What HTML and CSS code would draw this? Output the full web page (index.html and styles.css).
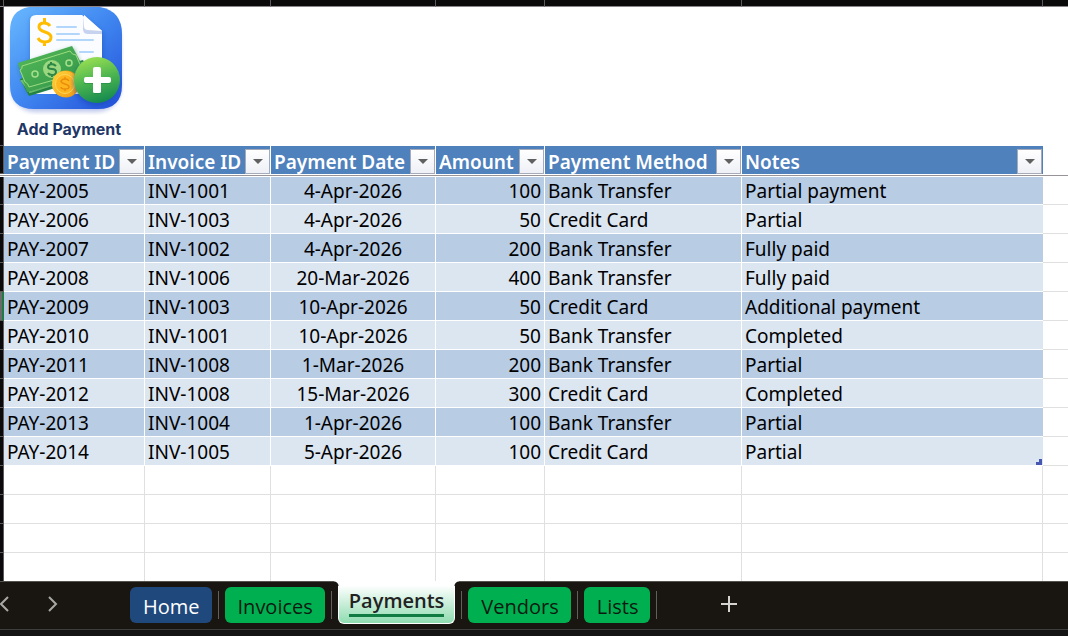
FILE: index.html
```
<!DOCTYPE html>
<html lang="en">
<head>
    <meta charset="UTF-8">
    <meta name="viewport" content="width=device-width, initial-scale=1.0">
    <title>Payments</title>
    <link rel="stylesheet" href="styles.css">
</head>
<body>
    <main class="sheet">
        <table class="grid">
            <colgroup>
                <col class="col-row">
                <col class="col-id">
                <col class="col-invoice">
                <col class="col-date">
                <col class="col-amount">
                <col class="col-method">
                <col class="col-notes">
                <col>
            </colgroup>
            <thead>
                <tr class="letters"><td></td><td></td><td></td><td></td><td></td><td></td><td></td><td></td></tr>
                <tr class="banner">
                    <td class="row-head"></td>
                    <td colspan="7">
                        <button type="button" class="add-payment">
                            <svg width="120" height="108" viewBox="0 0 120 108" aria-hidden="true">
                                <defs>
                                    <linearGradient id="tile" x1="0" y1="0" x2="1" y2="1">
                                        <stop offset="0" stop-color="#69b8ff"/>
                                        <stop offset="0.5" stop-color="#3f86f0"/>
                                        <stop offset="1" stop-color="#2450d8"/>
                                    </linearGradient>
                                    <linearGradient id="plus" x1="0.3" y1="0" x2="0.6" y2="1">
                                        <stop offset="0" stop-color="#9be052"/>
                                        <stop offset="0.5" stop-color="#4cb550"/>
                                        <stop offset="1" stop-color="#14894f"/>
                                    </linearGradient>
                                    <linearGradient id="bill" x1="0" y1="0" x2="1" y2="1">
                                        <stop offset="0" stop-color="#55bb58"/>
                                        <stop offset="1" stop-color="#2f9148"/>
                                    </linearGradient>
                                    <linearGradient id="coin" x1="0" y1="0" x2="1" y2="1">
                                        <stop offset="0" stop-color="#ffd43c"/>
                                        <stop offset="1" stop-color="#f59a12"/>
                                    </linearGradient>
                                    <filter id="soft" x="-20%" y="-20%" width="140%" height="140%">
                                        <feGaussianBlur stdDeviation="2"/>
                                    </filter>
                                </defs>
                                <rect x="7" y="8" width="110" height="97" rx="24" fill="#4b63c8" opacity="0.35" filter="url(#soft)"/>
                                <path d="M25 0h71q22 4 22 27v51q0 24-24 24H30Q6 102 6 78V24Q6 3 25 0z" fill="url(#tile)"/>
                                <path d="M32 11h50l18 15v58H34q-8 0-8-7V16q0-8 6-5z" fill="#1d50bb" opacity="0.4" filter="url(#soft)"/>
                                <path d="M32 8h46l20 16v63H32q-6 0-6-6V14q0-6 6-6z" fill="#fafcff"/>
                                <path d="M80 8l18 16v3H84q-5 0-5-5z" fill="#c6d2ee"/>
                                <path d="M80 8l18 16-14-1q-4 0-4-4z" fill="#ffffff"/>
                                <path d="M53 20h19M53 27h22M53 33h36M76 45h13" stroke="#b2d7fb" stroke-width="2" stroke-linecap="round"/>
                                <path d="M46 19q-2-3-6-3-5 0-5 4 0 3 6 5 6 2 6 5 0 5-6 5-5 0-7-4M40.500 15v-4M40.500 35v4" fill="none" stroke="#ffbd00" stroke-width="3"/>
                                <path d="M16 72l63-19 8 17-62 19z" fill="#238344"/>
                                <path d="M18 74l60-18 5 11-57 18z" fill="none" stroke="#7ecd73" stroke-width="2"/>
                                <path d="M14 58l53-17q4 0 5 5l11 24-60 16z" fill="#1c733f" opacity="0.45" filter="url(#soft)"/>
                                <path d="M14 56l54-17 15 28-60 18z" fill="url(#bill)"/>
                                <path d="M18 59l48-15q2 4 6 4l6 14q-3 1-3 4l-50 14q-1-4-4-5l-5-12q3-1 2-4z" fill="none" stroke="#9ddd7e" stroke-width="1"/>
                                <circle cx="48" cy="62" r="9" fill="#9bd77f"/>
                                <path d="M52 59q-2-2-5-2-3 1-3 3t4 2q4 0 4 3t-4 3q-3 0-4-2M47 55v2M48 68v2" fill="none" stroke="#2c8645" stroke-width="2"/>
                                <circle cx="31" cy="67" r="3" fill="none" stroke="#a6df8a" stroke-width="1.5"/>
                                <circle cx="65" cy="56" r="3" fill="none" stroke="#a6df8a" stroke-width="1.5"/>
                                <circle cx="62" cy="77" r="13.5" fill="#ef9a12"/>
                                <circle cx="61" cy="77" r="13" fill="url(#coin)"/>
                                <circle cx="61" cy="77" r="9.5" fill="#ffb51e" stroke="#ffd75a" stroke-width="1"/>
                                <path d="M65 74q-1-2-4-2t-4 2q0 2 4 3t4 3q0 2-4 2t-4-2M61 70v2M61 82v2" fill="none" stroke="#e88e0c" stroke-width="1.500"/>
                                <circle cx="92" cy="76" r="23" fill="#173fae" opacity="0.45" filter="url(#soft)"/>
                                <circle cx="93" cy="73" r="23" fill="url(#plus)"/>
                                <rect x="90" y="61" width="7" height="26" rx="1" fill="#187844" opacity="0.4"/>
                                <rect x="80" y="71" width="27" height="6" rx="1" fill="#187844" opacity="0.4"/>
                                <path d="M91 60h4q2 0 2 2v8h8q2 0 2 2v2q0 2-2 2h-8v9q0 1-2 1h-4q-2 0-2-1v-9h-7q-2 0-2-2v-2q0-2 2-2h7v-8q0-2 2-2z" fill="#fff"/>
                            </svg>
                            <span class="add-label">Add Payment</span>
                        </button>
                    </td>
                </tr>
                <tr class="titles">
                    <td class="row-head"></td>
                    <th scope="col"><div class="title">Payment ID<button type="button" class="filter" aria-label="Filter Payment ID"></button></div></th>
                    <th scope="col"><div class="title">Invoice ID<button type="button" class="filter" aria-label="Filter Invoice ID"></button></div></th>
                    <th scope="col"><div class="title">Payment Date<button type="button" class="filter" aria-label="Filter Payment Date"></button></div></th>
                    <th scope="col"><div class="title">Amount<button type="button" class="filter" aria-label="Filter Amount"></button></div></th>
                    <th scope="col"><div class="title">Payment Method<button type="button" class="filter" aria-label="Filter Payment Method"></button></div></th>
                    <th scope="col"><div class="title">Notes<button type="button" class="filter" aria-label="Filter Notes"></button></div></th>
                    <td></td>
                </tr>
                <tr class="freeze"><td colspan="8"></td></tr>
            </thead>
            <tbody class="data">
                <tr><td class="row-head"></td><td>PAY-2005</td><td>INV-1001</td><td class="date">4-Apr-2026</td><td class="amount">100</td><td>Bank Transfer</td><td>Partial payment</td><td></td></tr>
                <tr><td class="row-head"></td><td>PAY-2006</td><td>INV-1003</td><td class="date">4-Apr-2026</td><td class="amount">50</td><td>Credit Card</td><td>Partial</td><td></td></tr>
                <tr><td class="row-head"></td><td>PAY-2007</td><td>INV-1002</td><td class="date">4-Apr-2026</td><td class="amount">200</td><td>Bank Transfer</td><td>Fully paid</td><td></td></tr>
                <tr><td class="row-head"></td><td>PAY-2008</td><td>INV-1006</td><td class="date">20-Mar-2026</td><td class="amount">400</td><td>Bank Transfer</td><td>Fully paid</td><td></td></tr>
                <tr><td class="row-head current"></td><td>PAY-2009</td><td>INV-1003</td><td class="date">10-Apr-2026</td><td class="amount">50</td><td>Credit Card</td><td>Additional payment</td><td></td></tr>
                <tr><td class="row-head"></td><td>PAY-2010</td><td>INV-1001</td><td class="date">10-Apr-2026</td><td class="amount">50</td><td>Bank Transfer</td><td>Completed</td><td></td></tr>
                <tr><td class="row-head"></td><td>PAY-2011</td><td>INV-1008</td><td class="date">1-Mar-2026</td><td class="amount">200</td><td>Bank Transfer</td><td>Partial</td><td></td></tr>
                <tr><td class="row-head"></td><td>PAY-2012</td><td>INV-1008</td><td class="date">15-Mar-2026</td><td class="amount">300</td><td>Credit Card</td><td>Completed</td><td></td></tr>
                <tr><td class="row-head"></td><td>PAY-2013</td><td>INV-1004</td><td class="date">1-Apr-2026</td><td class="amount">100</td><td>Bank Transfer</td><td>Partial</td><td></td></tr>
                <tr><td class="row-head"></td><td>PAY-2014</td><td>INV-1005</td><td class="date">5-Apr-2026</td><td class="amount">100</td><td>Credit Card</td><td class="table-end">Partial</td><td></td></tr>
            </tbody>
            <tbody class="empty">
                <tr><td class="row-head"></td><td></td><td></td><td></td><td></td><td></td><td></td><td></td></tr>
                <tr><td class="row-head"></td><td></td><td></td><td></td><td></td><td></td><td></td><td></td></tr>
                <tr><td class="row-head"></td><td></td><td></td><td></td><td></td><td></td><td></td><td></td></tr>
                <tr><td class="row-head"></td><td></td><td></td><td></td><td></td><td></td><td></td><td></td></tr>
            </tbody>
        </table>
    </main>

    <nav class="tabbar" aria-label="Sheets">
        <div class="arrows">
            <button type="button" class="arrow" aria-label="Previous sheets">
                <svg width="10" height="16" viewBox="0 0 10 16"><path d="M8 1L1 8l7 7"/></svg>
            </button>
            <button type="button" class="arrow" aria-label="Next sheets">
                <svg width="10" height="16" viewBox="0 0 10 16"><path d="M1 1l7 7-7 7"/></svg>
            </button>
        </div>
        <button type="button" class="tab home">Home</button>
        <span class="divider"></span>
        <button type="button" class="tab">Invoices</button>
        <span class="divider"></span>
        <button type="button" class="tab active"><span>Payments</span></button>
        <span class="divider"></span>
        <button type="button" class="tab">Vendors</button>
        <span class="divider"></span>
        <button type="button" class="tab">Lists</button>
        <span class="divider"></span>
        <button type="button" class="new-sheet" aria-label="New sheet">
            <svg width="18" height="18" viewBox="0 0 18 18"><path d="M9 1v16M1 9h16"/></svg>
        </button>
    </nav>
    <footer class="status"></footer>
</body>
</html>
```
FILE: styles.css
```
* {
    box-sizing: border-box;
}

body {
    margin: 0;
    min-height: 100vh;
    display: flex;
    flex-direction: column;
    background: #141414;
    color: #000;
    font-family: "Noto Sans", "Open Sans", sans-serif;
    font-size: 19px;
    overflow: hidden;
}

button {
    border: none;
    padding: 0;
    background: none;
    font: inherit;
    cursor: pointer;
}

.sheet {
    background: #fff;
}

/* grid */
.grid {
    width: 100%;
    table-layout: fixed;
    border-collapse: separate;
    border-spacing: 0;
}

.col-row { width: 4px; }
.col-id { width: 141px; }
.col-invoice { width: 126px; }
.col-date { width: 165px; }
.col-amount { width: 109px; }
.col-method { width: 197px; }
.col-notes { width: 301px; }

.grid td,
.grid th {
    padding: 0;
    text-align: left;
    white-space: nowrap;
}

.letters td {
    height: 7px;
    background: #0a0a0a;
    border-right: 1px solid #5c5a5c;
    border-bottom: 1px solid #8a868a;
}

.letters td:last-child {
    border-right: none;
}

.grid .row-head {
    background: #0a0a0a;
    border-right: 1px solid #5c5a5c;
    border-bottom: 1px solid #5c5a5c;
}

.banner td {
    height: 139px;
    vertical-align: top;
}

.add-payment {
    display: block;
    width: 122px;
    text-align: center;
}

.add-payment svg {
    display: block;
}

.add-label {
    display: block;
    padding-left: 8px;
    color: #1f3767;
    font-family: Inter, sans-serif;
    font-size: 16px;
    font-weight: 700;
    line-height: 28px;
}

.titles th {
    height: 28px;
    background: #4f81bd;
    border-right: 1px solid #fff;
    color: #fff;
    font-weight: 600;
}

.titles th:nth-child(7) {
    border-right: 1px solid #4f81bd;
}

.title {
    display: flex;
    justify-content: space-between;
    align-items: center;
    height: 28px;
    padding: 3px 0 0 3px;
}

.filter {
    display: flex;
    flex: none;
    justify-content: center;
    align-items: center;
    width: 25px;
    height: 25px;
    background: linear-gradient(#fff, #eef0f6);
    border: 1px solid #a5abb8;
}

.filter::before {
    content: '';
    border: 5px solid transparent;
    border-top-color: #606060;
    border-bottom: none;
}

.freeze td {
    height: 3px;
    background: linear-gradient(#fff 1px, #979397 1px, #979397 2px, #fff 2px);
}

.data td {
    height: 29px;
    padding: 2px 3px 0;
    border-right: 1px solid #fff;
    border-bottom: 1px solid #fff;
    line-height: 26px;
}

.data tr:first-child td {
    height: 28px;
    line-height: 25px;
}

.data tr:nth-child(odd) td {
    background: #b8cce4;
}

.data tr:nth-child(even) td {
    background: #dce6f1;
}

.data tr:nth-child(n) .row-head {
    padding: 0;
    background: #0a0a0a;
    border-right-color: #5c5a5c;
    border-bottom-color: #5c5a5c;
}

.data tr:nth-child(n) .current {
    background: #6a6a6a;
    border-right: 2px solid #1f7a45;
}

.data td:nth-child(7) {
    border-right: none;
}

.data tr:nth-child(n) td:last-child {
    background: #fff;
    border-right: none;
    border-bottom-color: #e0e0e0;
}

.data .date {
    text-align: center;
}

.data .amount {
    text-align: right;
}

/* corner handle of the table */
.table-end {
    position: relative;
}

.table-end::after {
    content: '';
    position: absolute;
    right: 1px;
    bottom: 0;
    width: 6px;
    height: 6px;
    background: #4658b0;
    clip-path: polygon(50% 0, 100% 0, 100% 100%, 0 100%, 0 50%, 50% 50%);
}

.empty td {
    height: 29px;
    border-right: 1px solid #e0e0e0;
    border-bottom: 1px solid #e0e0e0;
}

.empty td:last-child {
    border-right: none;
}

.empty tr:last-child td {
    height: 28px;
    border-bottom: none;
}

/* sheet tabs */
.tabbar {
    display: flex;
    align-items: flex-start;
    height: 49px;
    background: #191611;
    border-top: 1px solid #555350;
    border-bottom: 1px solid #3d3d3d;
    font-family: "Open Sans", "Noto Sans", sans-serif;
    font-size: 20px;
}

.arrows {
    display: flex;
    gap: 38px;
    width: 130px;
    padding-top: 14px;
}

.arrow svg,
.new-sheet svg {
    display: block;
    fill: none;
    stroke: #aaa8a4;
    stroke-width: 2;
}

.new-sheet svg {
    stroke: #d6d4d0;
}

.tab {
    height: 36px;
    margin-top: 5px;
    padding: 2px 12px 0 13px;
    background: #00b050;
    border-radius: 6px;
    color: #0b1a10;
}

.tab.home {
    background: #1f497d;
    color: #fff;
}

.divider {
    width: 1px;
    height: 28px;
    margin: 9px 6px 0;
    background: #62605c;
}

.tab.active {
    position: relative;
    height: 43px;
    margin-top: -1px;
    padding: 0 10px;
    background: linear-gradient(#fff 10%, #8fdcb0);
    border: 1px solid #fff;
    border-top: none;
    border-radius: 0 0 6px 6px;
    color: #222;
    font-weight: 600;
}

.tab.active span {
    display: block;
    border-bottom: 3px solid #107c41;
}

/* curved joins between the active tab and the sheet */
.tab.active::before,
.tab.active::after {
    content: '';
    position: absolute;
    top: 0;
    width: 5px;
    height: 5px;
}

.tab.active::before {
    right: 100%;
    background: radial-gradient(circle at 0 100%, #191611 4px, #fff 5px);
}

.tab.active::after {
    left: 100%;
    background: radial-gradient(circle at 100% 100%, #191611 4px, #fff 5px);
}

.new-sheet {
    margin: 13px 0 0 57px;
}

.status {
    flex: 1;
    min-height: 6px;
}
```
